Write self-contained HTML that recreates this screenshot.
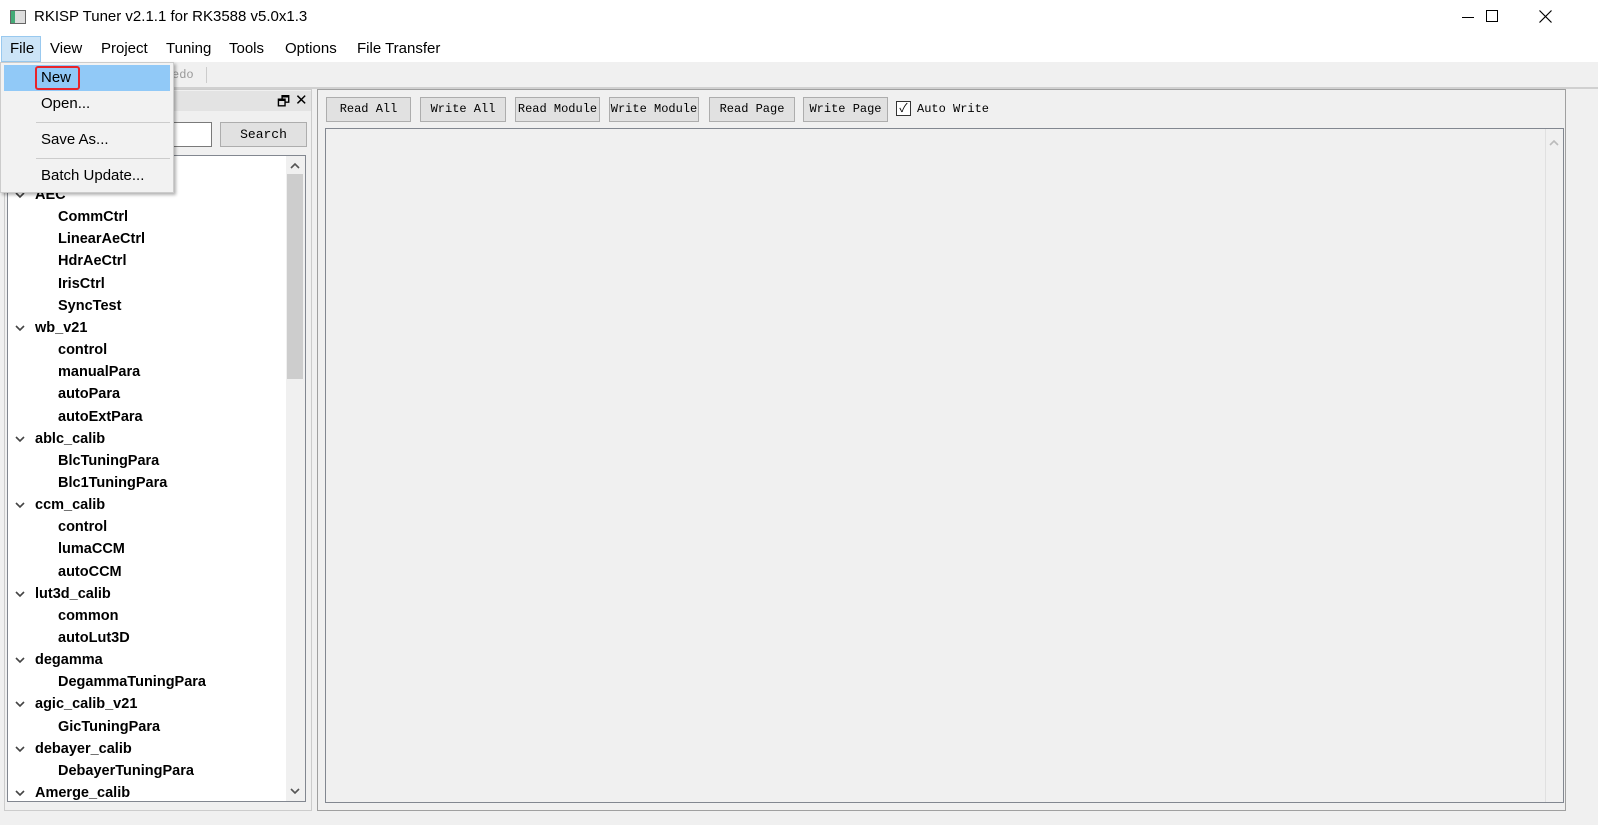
<!DOCTYPE html>
<html><head><meta charset="utf-8"><style>
*{box-sizing:border-box;margin:0;padding:0}
body{width:1598px;height:825px;overflow:hidden;background:#f0f0f0;font-family:"Liberation Sans","Noto Sans CJK SC",sans-serif;position:relative}
.a{position:absolute}
.mono{font-family:"Liberation Mono","Noto Sans CJK SC",monospace;font-size:12px}
.btn{position:absolute;top:97px;height:25px;background:#e1e1e1;border:1px solid #adadad;text-align:center;line-height:23px;color:#000}
.row{position:absolute;left:0;font-weight:bold;font-size:14.5px;color:#000;height:22px;line-height:22px}
.chev{position:absolute;left:7px;width:10px;height:7px}
</style></head><body>
<div class="a" style="left:0;top:0;width:1598px;height:62px;background:#fff"></div>
<div class="a" style="left:10px;top:10px;width:16px;height:14px;border:1px solid #666;background:linear-gradient(90deg,#4a7 0 30%,#ddd 30%)"></div>
<div class="a" style="left:34px;top:8px;font-size:15px;color:#000">RKISP Tuner v2.1.1 for RK3588 v5.0x1.3</div>
<div class="a" style="left:1462px;top:17px;width:12px;height:1px;background:#000"></div>
<div class="a" style="left:1486px;top:10px;width:12px;height:12px;border:1px solid #000"></div>
<svg class="a" style="left:1539px;top:10px" width="13" height="13"><path d="M0.5 0.5L12.5 12.5M12.5 0.5L0.5 12.5" stroke="#000" stroke-width="1.2"/></svg>
<div class="a" style="left:1px;top:36px;width:40px;height:26px;background:#cce4f7;border:1px solid #99c9ef"></div>
<div class="a" style="left:10px;top:40px;font-size:15px">File</div>
<div class="a" style="left:50px;top:40px;font-size:15px">View</div>
<div class="a" style="left:101px;top:40px;font-size:15px">Project</div>
<div class="a" style="left:166px;top:40px;font-size:15px">Tuning</div>
<div class="a" style="left:229px;top:40px;font-size:15px">Tools</div>
<div class="a" style="left:285px;top:40px;font-size:15px">Options</div>
<div class="a" style="left:357px;top:40px;font-size:15px">File Transfer</div>
<div class="a mono" style="left:172px;top:68px;color:#999">edo</div>
<div class="a" style="left:206px;top:67px;width:1px;height:16px;background:#ccc"></div>
<div class="a" style="left:0;top:87px;width:1598px;height:2px;background:#d0d0d0"></div>
<!-- left dock -->
<div class="a" style="left:4px;top:89px;width:308px;height:722px;border:1px solid #ccc;background:#f0f0f0"></div>
<div class="a" style="left:5px;top:91px;width:306px;height:20px;background:#e3e3e3"></div>
<div class="a" style="left:277px;top:91px;font-size:14px">🗗</div>
<div class="a" style="left:295px;top:91px;font-size:15px">✕</div>
<div class="a" style="left:110px;top:122px;width:102px;height:25px;background:#fff;border:1px solid #7a7a7a"></div>
<div class="btn mono" style="left:220px;top:122px;width:87px;font-size:13px">Search</div>
<div class="a" style="left:7px;top:155px;width:299px;height:647px;background:#fff;border:1px solid #828790;overflow:hidden">
<div class="a" style="right:0;top:0;width:19px;height:645px;background:#f0f0f0"></div>
<div class="a" style="right:2px;top:18px;width:16px;height:205px;background:#cdcdcd"></div>
<svg class="a" style="right:5px;top:6px" width="10" height="7"><path d="M1 6L5 2L9 6" stroke="#555" stroke-width="1.6" fill="none"/></svg>
<svg class="a" style="right:5px;bottom:6px" width="10" height="7"><path d="M1 1L5 5L9 1" stroke="#555" stroke-width="1.6" fill="none"/></svg>
<div id="tree"></div>
</div>
<script>
var items=[[0,"AEC"],[1,"CommCtrl"],[1,"LinearAeCtrl"],[1,"HdrAeCtrl"],[1,"IrisCtrl"],[1,"SyncTest"],[0,"wb_v21"],[1,"control"],[1,"manualPara"],[1,"autoPara"],[1,"autoExtPara"],[0,"ablc_calib"],[1,"BlcTuningPara"],[1,"Blc1TuningPara"],[0,"ccm_calib"],[1,"control"],[1,"lumaCCM"],[1,"autoCCM"],[0,"lut3d_calib"],[1,"common"],[1,"autoLut3D"],[0,"degamma"],[1,"DegammaTuningPara"],[0,"agic_calib_v21"],[1,"GicTuningPara"],[0,"debayer_calib"],[1,"DebayerTuningPara"],[0,"Amerge_calib"]];
var h="";items.forEach(function(it,i){var y=28+i*22.15;
if(it[0]==0)h+='<svg class="chev" style="top:'+(y+8)+'px" width="10" height="7"><path d="M1 1L5 5L9 1" stroke="#444" stroke-width="1.6" fill="none"/></svg>';
h+='<div class="row" style="top:'+y+'px;left:'+(it[0]?50:27)+'px">'+it[1]+'</div>';});
document.getElementById('tree').innerHTML=h;
</script>
<!-- right panel -->
<div class="a" style="left:317px;top:89px;width:1249px;height:722px;border:1px solid #a0a0a0;background:#f0f0f0"></div>
<div class="btn mono" style="left:326px;width:85px">Read All</div>
<div class="btn mono" style="left:420px;width:86px">Write All</div>
<div class="btn mono" style="left:515px;width:85px">Read Module</div>
<div class="btn mono" style="left:609px;width:90px">Write Module</div>
<div class="btn mono" style="left:709px;width:86px">Read Page</div>
<div class="btn mono" style="left:803px;width:85px">Write Page</div>
<div class="a" style="left:896px;top:101px;width:15px;height:15px;border:1px solid #333;background:#fff;font-size:12px;line-height:13px;text-align:center">✓</div>
<div class="a mono" style="left:917px;top:102px">Auto Write</div>
<div class="a" style="left:325px;top:128px;width:1239px;height:675px;border:1px solid #828790;background:#f0f0f0"></div>
<div class="a" style="left:1545px;top:129px;width:18px;height:673px;border-left:1px solid #e0e0e0"></div>
<svg class="a" style="left:1549px;top:139px" width="10" height="7"><path d="M1 6L5 2L9 6" stroke="#bbb" stroke-width="1.6" fill="none"/></svg>
<!-- dropdown -->
<div class="a" style="left:0;top:62px;width:174px;height:131px;background:#f2f2f2;border:1px solid #ccc;box-shadow:2px 2px 3px rgba(0,0,0,.3)"></div>
<div class="a" style="left:4px;top:65px;width:166px;height:26px;background:#91c9f7"></div>
<div class="a" style="left:35px;top:66px;width:45px;height:24px;border:2px solid #e8242a;border-radius:3px"></div>
<div class="a" style="left:41px;top:69px;font-size:15px">New</div>
<div class="a" style="left:41px;top:95px;font-size:15px">Open...</div>
<div class="a" style="left:36px;top:122px;width:134px;height:1px;background:#ccc"></div>
<div class="a" style="left:41px;top:131px;font-size:15px">Save As...</div>
<div class="a" style="left:36px;top:158px;width:134px;height:1px;background:#ccc"></div>
<div class="a" style="left:41px;top:167px;font-size:15px">Batch Update...</div>
</body></html>
